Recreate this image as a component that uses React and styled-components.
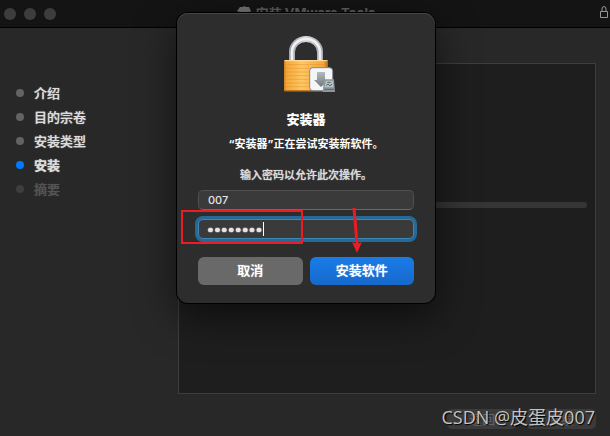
import React from 'react'
import styled, { createGlobalStyle } from 'styled-components'

const GlobalStyle = createGlobalStyle`
  * {
    box-sizing: border-box;
  }

  body {
    margin: 0;
    background-color: #282828;
    color: #e4e4e4;
    font-family: Inter, "Noto Sans CJK SC", sans-serif;
    font-size: 13px;
    line-height: 20px;
  }

  button, input {
    font: inherit;
    color: inherit;
  }
`;

const Window = styled.div`
  position: relative;
  display: flex;
  flex-direction: column;
  min-height: 100vh;
  overflow: hidden;
`;

const TitleBar = styled.header`
  display: grid;
  grid-template-columns: 1fr auto 1fr;
  align-items: center;
  height: 28px;
  padding: 0 2px 0 4px;
  background-color: #141414;
  border-bottom: 1px solid #000;
`;

const Lights = styled.div`
  display: flex;
  gap: 8px;
`;

const Light = styled.span`
  width: 12px;
  height: 12px;
  border-radius: 50%;
  background-color: #3d3d3d;
`;

const WindowTitle = styled.h1`
  display: flex;
  align-items: center;
  gap: 4px;
  margin: 0;
  padding-bottom: 2px;
  font-size: 13px;
  font-weight: 700;
  color: #606060;
`;

const BarLock = styled.svg`
  justify-self: end;
  width: 8px;
  height: 12px;
  margin-bottom: 4px;
`;

const Content = styled.div`
  flex: 1;
  display: flex;
  padding: 35px 14px 0 16px;
`;

const Steps = styled.ol`
  flex: 0 0 162px;
  margin: 0;
  padding: 18px 0 0;
  list-style: none;
`;

const Step = styled.li`
  display: flex;
  align-items: center;
  gap: 10px;
  height: 24px;
  font-weight: ${props => props.$state === 'current' ? 700 : 500};
  color: ${props => props.$state === 'pending' ? '#545454' : '#dcdcdc'};
  text-shadow: 0 0 1px currentColor;

  &::before {
    content: '';
    width: 8px;
    height: 8px;
    border-radius: 50%;
    background-color: ${props => ({ done: '#636363', current: '#007aff', pending: '#3e3e3e' })[props.$state]};
  }
`;

const Panel = styled.main`
  flex: 1;
  padding: 138px 8px 0;
  background-color: #1e1e1e;
  border: 1px solid #3e3e3e;
`;

const Track = styled.div`
  height: 6px;
  border-radius: 3px;
  background-color: #353535;
`;

const Footer = styled.footer`
  display: flex;
  justify-content: flex-end;
  gap: 9px;
  padding: 15px 14px 7px;
`;

const NavButton = styled.button`
  width: 70px;
  height: 20px;
  padding: 0;
  border: 0;
  border-radius: 5px;
  background-color: #3b3b3b;
  line-height: 20px;
  color: #646464;
`;

const Overlay = styled.div`
  position: absolute;
  top: 13px;
  left: 0;
  right: 0;
  display: flex;
  justify-content: center;
  padding-left: 2px;
`;

const Dialog = styled.section`
  display: flex;
  flex-direction: column;
  width: 258px;
  padding: 23px 21px 18px;
  border-radius: 11px;
  background-color: #2d2d2d;
  box-shadow: inset 0 1px 0 #454545, 0 0 0 1px #000, 0 12px 40px rgba(0,0,0,0.6);
  text-align: center;
`;

const LockArt = styled.svg`
  align-self: center;
  width: 60px;
  height: 57px;
`;

const DialogTitle = styled.h2`
  margin: 16px 0 5px;
  font-size: 13px;
  font-weight: 900;
  color: #fff;
`;

const Message = styled.p`
  margin: 0 0 11px;
  font-size: 11px;
  font-weight: ${props => props.$strong ? 700 : 500};
  color: ${props => props.$strong ? '#fff' : '#dcdcdc'};
  text-shadow: ${props => props.$strong ? 'none' : '0 0 1px currentColor'};
`;

const Form = styled.form`
  display: flex;
  flex-direction: column;
  gap: 9px;
  margin-top: -6px;
`;

const Field = styled.div`
  position: relative;
  display: flex;
`;

const Input = styled.input`
  flex: 1;
  min-width: 0;
  height: 20px;
  padding: 0 9px;
  border: 1px solid ${props => props.$focused ? '#3f86b3' : '#505050'};
  border-bottom-color: ${props => props.$focused ? '#3f86b3' : '#6a6a6a'};
  border-radius: 5px;
  outline: 0;
  background-color: #3a3a3a;
  box-shadow: ${props => props.$focused ? '0 0 0 3px #256a96' : 'none'};
  font-size: 11px;
  font-weight: 500;

  &[type='password'] {
    padding: 0 8px;
    font-size: 13px;
    text-shadow: 0 0 1px currentColor, 0 0 1px currentColor, 0 0 1px currentColor;
  }
`;

const Caret = styled.span`
  position: absolute;
  top: 3px;
  left: 65px;
  width: 1px;
  height: 14px;
  background-color: #fff;
`;

const Highlight = styled.span`
  position: absolute;
  top: -9px;
  left: -17px;
  width: 122px;
  height: 34px;
  border: 2px solid #ed1c24;
`;

const Pointer = styled.svg`
  position: absolute;
  top: -12px;
  left: 150px;
  width: 16px;
  height: 48px;
  pointer-events: none;
`;

const Actions = styled.div`
  display: grid;
  grid-template-columns: 1fr 1fr;
  gap: 7px;
  margin-top: 9px;
`;

const ActionButton = styled.button`
  height: 28px;
  padding: 0 0 2px;
  border: 0;
  border-radius: 6px;
  background: ${props => props.$primary ? 'linear-gradient(#1a7ce8, #1669cb)' : '#696969'};
  font-weight: 500;
  color: #fff;
  text-shadow: 0 0 1px currentColor;
`;

const Watermark = styled.div`
  position: absolute;
  right: 15px;
  bottom: 6px;
  font-family: "Open Sans", "Noto Sans CJK SC", sans-serif;
  font-size: 18px;
  font-weight: 400;
  line-height: 26px;
  color: #c4c4c4;
  text-shadow: 1px 1px 1px #000;
`;

const steps = [
  { name: '介绍', state: 'done' },
  { name: '目的宗卷', state: 'done' },
  { name: '安装类型', state: 'done' },
  { name: '安装', state: 'current' },
  { name: '摘要', state: 'pending' },
]

const BoxIcon = () => (
  <svg width="15" height="14" viewBox="0 0 15 14" aria-hidden="true">
    <path d="M3 1h3l1.5-1L9 1h3l2 4-1 1v6l-5 2-6-2V6L0 5z" fill="#747474" />
    <path d="M2 6l5.500 1.500L13 6" stroke="#3c3c3c" fill="none" />
  </svg>
)

const Padlock = () => (
  <LockArt viewBox="48 48 180 171" aria-hidden="true">
    <defs>
      <linearGradient id="gold" x2="1" y2="0">
        <stop offset="0" stopColor="#c98425" />
        <stop offset="0.06" stopColor="#f5a83a" />
        <stop offset="0.4" stopColor="#ffc765" />
        <stop offset="0.9" stopColor="#f3a63a" />
        <stop offset="1" stopColor="#a8681a" />
      </linearGradient>
      <linearGradient id="steel" x2="1" y2="0">
        <stop offset="0" stopColor="#a4a6ab" />
        <stop offset="0.5" stopColor="#d6d7da" />
        <stop offset="1" stopColor="#a9abb0" />
      </linearGradient>
      <linearGradient id="arrow" x2="0" y2="1">
        <stop offset="0" stopColor="#b4bbbd" />
        <stop offset="1" stopColor="#6f797c" />
      </linearGradient>
    </defs>
    <path d="M96 122V96a42 39 0 0 1 84 0v26" fill="none" stroke="url(#steel)" strokeWidth="18" />
    <path d="M96 120V96a42 39 0 0 1 84 0v24" fill="none" stroke="#f1f1f5" strokeWidth="8" />
    <rect x="72" y="120" width="132" height="94" rx="3" fill="url(#gold)" />
    <path d="M74 122h128" stroke="#ffe3a4" strokeWidth="3" />
    <path d="M74 134h128M74 145h128M74 156h128M74 167h128M74 178h128M74 189h128M74 200h128" stroke="#d98a22" strokeOpacity="0.4" strokeWidth="3" />
    <path d="M73 212h130" stroke="#b06e1b" strokeWidth="3" />
    <rect x="149" y="143" width="69" height="69" rx="10" fill="#f3f5f8" stroke="#85888d" strokeWidth="3" />
    <path d="M171 156h24v24h11l-23 21-21-21h9z" fill="url(#arrow)" />
    <path d="M192 178h30l3 38h-37z" fill="#8d989d" />
    <path d="M197 182h21l3 20h-27z" fill="#b5c0c4" />
    <path d="M193 208h29M202 187h10M199 196l5-4 5 5 7-4" stroke="#58646a" strokeWidth="3" fill="none" />
  </LockArt>
)

const App = () => (
  <>
    <GlobalStyle />
    <Window>
      <TitleBar>
        <Lights>
          <Light />
          <Light />
          <Light />
        </Lights>
        <WindowTitle>
          <BoxIcon />
          安装 VMware Tools
        </WindowTitle>
        <BarLock viewBox="0 0 8 12" fill="none" stroke="#969696" aria-hidden="true">
          <path d="M.5 5.500h7v6h-7zM2 5.500V3a2 2.500 0 0 1 4 0v2.500" />
        </BarLock>
      </TitleBar>
      <Content>
        <Steps>
          {steps.map(step => (
            <Step key={step.name} $state={step.state}>{step.name}</Step>
          ))}
        </Steps>
        <Panel>
          <Track role="progressbar" aria-label="安装" />
        </Panel>
      </Content>
      <Footer>
        <NavButton disabled>返回</NavButton>
        <NavButton disabled>继续</NavButton>
      </Footer>

      <Overlay>
        <Dialog role="dialog" aria-labelledby="dialog-title">
          <Padlock />
          <DialogTitle id="dialog-title">安装器</DialogTitle>
          <Message $strong>“安装器”正在尝试安装新软件。</Message>
          <Message>输入密码以允许此次操作。</Message>
          <Form onSubmit={e => e.preventDefault()}>
            <Field>
              <Input type="text" aria-label="用户名" defaultValue="007" />
            </Field>
            <Field>
              <Input type="password" aria-label="密码" defaultValue="password" $focused />
              <Caret />
              <Highlight />
              <Pointer viewBox="0 0 16 48" aria-hidden="true">
                <path d="M6 1l3 36" stroke="#ed1c24" strokeWidth="3" />
                <path d="M4 35l5 2 5-2-5 11z" fill="#ed1c24" />
              </Pointer>
            </Field>
            <Actions>
              <ActionButton type="button">取消</ActionButton>
              <ActionButton type="submit" $primary>安装软件</ActionButton>
            </Actions>
          </Form>
        </Dialog>
      </Overlay>

      <Watermark>CSDN @皮蛋皮007</Watermark>
    </Window>
  </>
)

export default App;
